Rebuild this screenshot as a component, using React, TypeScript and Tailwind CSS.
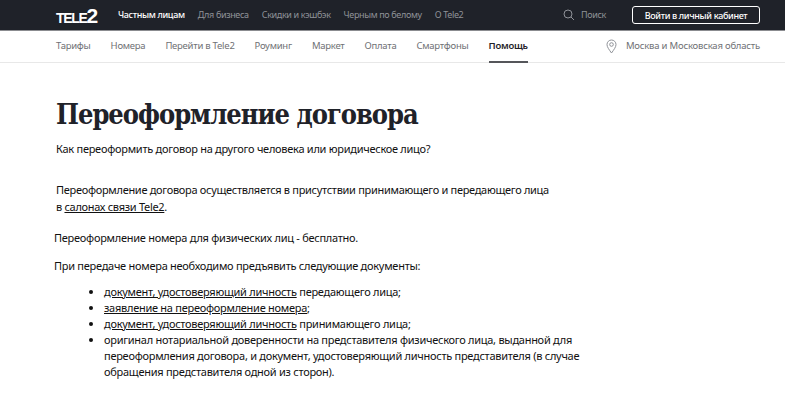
import React from "react";

export default function App() {
  const top = ["Для бизнеса", "Скидки и кэшбэк", "Черным по белому", "О Tele2"];
  const sub = ["Тарифы", "Номера", "Перейти в Tele2", "Роуминг", "Маркет", "Оплата", "Смартфоны"];
  return (
    <div className="h-[400px] w-[785px] overflow-hidden bg-white font-['Noto_Sans',sans-serif] text-[11px] tracking-[-0.27px] text-[#111]">
      <header className="flex h-[31px] items-center justify-between border-b border-[#8b8c90] bg-[#1f2229] pl-[56px] pr-[25px] tracking-[-0.35px]">
        <div className="flex items-center whitespace-nowrap">
          <span className="flex w-[62px] items-baseline font-['Liberation_Sans',sans-serif] font-bold leading-none text-white">
            <span className="text-[14px] tracking-[-1.3px]">TELE</span><span className="text-[21px]">2</span>
          </span>
          <span className="text-[9px] font-medium text-white">Частным лицам</span>
          <nav className="ml-[13px] flex gap-[13px] text-[9px] text-[#8f9298]">
            {top.map((t) => (<span key={t}>{t}</span>))}
          </nav>
        </div>
        <div className="flex items-center whitespace-nowrap">
          <svg width="12" height="12" viewBox="0 0 12 12" fill="none" stroke="#8f9298" strokeWidth="1" className="mr-[6px]">
            <circle cx="5" cy="5" r="4" />
            <path d="M8 8l3 3" />
          </svg>
          <span className="text-[9px] text-[#8f9298]">Поиск</span>
          <button className="ml-[26px] h-[18px] w-[128px] rounded-[3px] border border-white text-[9px] font-medium leading-none tracking-[-0.35px] text-white">Войти в личный кабинет</button>
        </div>
      </header>
      <div className="flex h-[32px] items-stretch justify-between whitespace-nowrap border-b border-[#e8e8e8] pl-[56px] pr-[25px] text-[9.5px] tracking-[-0.25px] text-[#6f7175]">
        <nav className="flex gap-[20px]">
          {sub.map((t) => (<span key={t} className="flex items-center">{t}</span>))}
          <span className="-mb-px flex items-center border-b-2 border-[#55565a] font-semibold text-[#1f2229]">Помощь</span>
        </nav>
        <div className="flex items-center">
          <svg width="11" height="15" viewBox="0 0 11 15" fill="none" stroke="#8f9298" strokeWidth="1" className="mr-[9px]">
            <path d="M5.5 14C3 10.5 1 8 1 5.5a4.5 4.5 0 0 1 9 0C10 8 8 10.5 5.5 14z" />
            <circle cx="5.5" cy="5.5" r="1.8" />
          </svg>
          <span className="tracking-[-0.2px]">Москва и Московская область</span>
        </div>
      </div>
      <main className="pl-[56px]">
        <h1 className="mt-[34px] whitespace-nowrap font-['DejaVu_Serif',serif] text-[27px] font-bold leading-[36px] tracking-[-1px] text-[#1f2229] [font-stretch:condensed]">Переоформление договора</h1>
        <p className="mt-[7px] leading-[17px]">Как переоформить договор на другого человека или юридическое лицо?</p>
        <p className="mt-[24px] whitespace-nowrap leading-[17px] tracking-[-0.3px]">
          Переоформление договора осуществляется в присутствии принимающего и передающего лица<br />в <span className="underline">салонах связи Tele2</span>.
        </p>
        <p className="-ml-[2px] mt-[15px] leading-[16px]">Переоформление номера для физических лиц - бесплатно.</p>
        <p className="-ml-[2px] mt-[12px] leading-[16px]">При передаче номера необходимо предъявить следующие документы:</p>
        <ul className="ml-[48px] mt-[10px] w-[480px] list-disc leading-[16px]">
          <li><span className="underline">документ, удостоверяющий личность</span> передающего лица;</li>
          <li><span className="underline">заявление на переоформление номера</span>;</li>
          <li><span className="underline">документ, удостоверяющий личность</span> принимающего лица;</li>
          <li>оригинал нотариальной доверенности на представителя физического лица, выданной для переоформления договора, и документ, удостоверяющий личность представителя (в случае обращения представителя одной из сторон).</li>
        </ul>
      </main>
    </div>
  );
}
